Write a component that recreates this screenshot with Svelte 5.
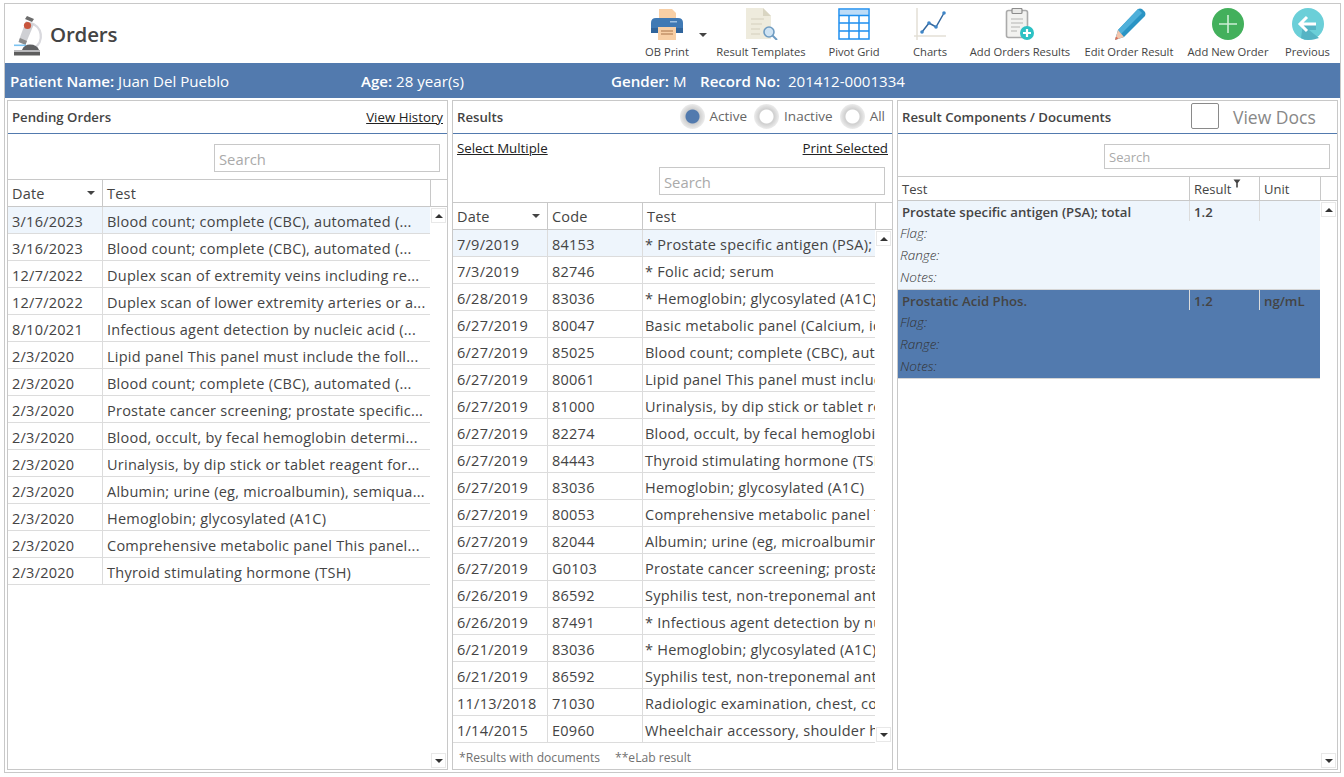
<script>
  const pending = [
    ['3/16/2023','Blood count; complete (CBC), automated (...'],
    ['3/16/2023','Blood count; complete (CBC), automated (...'],
    ['12/7/2022','Duplex scan of extremity veins including re...'],
    ['12/7/2022','Duplex scan of lower extremity arteries or a...'],
    ['8/10/2021','Infectious agent detection by nucleic acid (...'],
    ['2/3/2020','Lipid panel This panel must include the foll...'],
    ['2/3/2020','Blood count; complete (CBC), automated (...'],
    ['2/3/2020','Prostate cancer screening; prostate specific...'],
    ['2/3/2020','Blood, occult, by fecal hemoglobin determi...'],
    ['2/3/2020','Urinalysis, by dip stick or tablet reagent for...'],
    ['2/3/2020','Albumin; urine (eg, microalbumin), semiqua...'],
    ['2/3/2020','Hemoglobin; glycosylated (A1C)'],
    ['2/3/2020','Comprehensive metabolic panel This panel...'],
    ['2/3/2020','Thyroid stimulating hormone (TSH)']
  ];
  const results = [
    ['7/9/2019','84153','* Prostate specific antigen (PSA); total'],
    ['7/3/2019','82746','* Folic acid; serum'],
    ['6/28/2019','83036','* Hemoglobin; glycosylated (A1C)'],
    ['6/27/2019','80047','Basic metabolic panel (Calcium, ionized)'],
    ['6/27/2019','85025','Blood count; complete (CBC), automated'],
    ['6/27/2019','80061','Lipid panel This panel must include'],
    ['6/27/2019','81000','Urinalysis, by dip stick or tablet reagent'],
    ['6/27/2019','82274','Blood, occult, by fecal hemoglobin'],
    ['6/27/2019','84443','Thyroid stimulating hormone (TSH)'],
    ['6/27/2019','83036','Hemoglobin; glycosylated (A1C)'],
    ['6/27/2019','80053','Comprehensive metabolic panel This'],
    ['6/27/2019','82044','Albumin; urine (eg, microalbumin)'],
    ['6/27/2019','G0103','Prostate cancer screening; prostate'],
    ['6/26/2019','86592','Syphilis test, non-treponemal antibody'],
    ['6/26/2019','87491','* Infectious agent detection by nucleic'],
    ['6/21/2019','83036','* Hemoglobin; glycosylated (A1C)'],
    ['6/21/2019','86592','Syphilis test, non-treponemal antibody'],
    ['11/13/2018','71030','Radiologic examination, chest, complete'],
    ['1/14/2015','E0960','Wheelchair accessory, shoulder harness']
  ];
  const comps = [
    { name: 'Prostate specific antigen (PSA); total', val: '1.2', unit: '', cls: 'hl' },
    { name: 'Prostatic Acid Phos.', val: '1.2', unit: 'ng/mL', cls: 'sel' }
  ];
</script>

<div class="shell">
  <header class="top">
    <div class="brand">
      <svg width="32" height="42" viewBox="0 0 32 42">
        <path d="M17 9 A13.5 13.5 0 0 1 21 34" fill="none" stroke="#d9d9de" stroke-width="2.4"/>
        <path d="M14 2 L21 5 L19 8 L12 5 Z" fill="#6c6c6c"/>
        <path d="M13 7 L21 10 L13 29 L6 26 Z" fill="#cfd0d4"/>
        <path d="M7 24 L14 27 L12.5 31 L5.500 28 Z" fill="#8b8b8b"/>
        <circle cx="14.500" cy="11.500" r="3.600" fill="#c8553d"/>
        <rect x="1" y="30.500" width="12" height="1.600" fill="#7cc4f2"/>
        <path d="M9 36 Q11 30.500 17 30.500 Q24 30.500 26 36 Z" fill="#5f6062"/>
        <rect x="1" y="36" width="26" height="2" fill="#b9b9bc"/>
        <rect x="1" y="38" width="26" height="3.500" fill="#5e5e5e"/>
      </svg>
      <h1>Orders</h1>
    </div>
    <nav class="tools">
      <div class="tool">
        <svg width="34" height="32" viewBox="0 0 34 32">
          <path d="M9 1 H22 L26 5 V12 H9 Z" fill="#f8cfa5"/>
          <path d="M6 10 H28 Q33 10 33 15 V25 H1 V15 Q1 10 6 10 Z" fill="#3f79b4"/>
          <rect x="1" y="20" width="32" height="5" fill="#30659c"/>
          <rect x="20" y="13" width="7" height="1.500" fill="#9cc0e2"/>
          <rect x="8" y="19" width="18" height="13" fill="#f8cfa5"/>
          <path d="M11 23 H23 M11 26 H23" stroke="#a9744a" stroke-width="1"/>
        </svg>
        <span>OB Print</span>
        <i class="drop"></i>
      </div>
      <div></div>
      <div class="tool">
        <svg width="34" height="32" viewBox="0 0 34 32">
          <path d="M2 0 H19 L27 8 V31 H2 Z" fill="#eeebdd"/>
          <path d="M19 0 L27 8 H19 Z" fill="#d9d5c2"/>
          <path d="M7 11 H20 M7 16 H18 M7 21 H16 M7 26 H16" stroke="#ddd9c8" stroke-width="1.500"/>
          <circle cx="25" cy="24" r="5" fill="#cfe3f3" stroke="#6f9cc2" stroke-width="1.600"/>
          <path d="M28.500 27.500 L33 32" stroke="#6f9cc2" stroke-width="2"/>
        </svg>
        <span>Result Templates</span>
      </div>
      <div class="tool">
        <svg width="32" height="32" viewBox="0 0 32 32">
          <rect x="1" y="1" width="30" height="30" fill="#fff" stroke="#1e8fef" stroke-width="1.500"/>
          <rect x="2" y="2" width="28" height="5" fill="#bddcf7"/>
          <path d="M1 7.500 H31 M1 15 H31 M1 23 H31 M11 7.500 V31 M21 7.500 V31" stroke="#1e8fef" stroke-width="1.500" fill="none"/>
        </svg>
        <span>Pivot Grid</span>
      </div>
      <div class="tool">
        <svg width="34" height="32" viewBox="0 0 34 32">
          <path d="M4 0 V32 M1 28 H33" stroke="#e3e0d6" stroke-width="1.500" fill="none"/>
          <path d="M9 24 L16 15 L23 19 L31 5" stroke="#33679e" stroke-width="1.500" fill="none"/>
          <circle cx="9" cy="24" r="1.800" fill="#3f86c8"/>
          <circle cx="16" cy="15" r="1.800" fill="#3f86c8"/>
          <circle cx="23" cy="19" r="1.800" fill="#3f86c8"/>
          <circle cx="31" cy="5" r="1.800" fill="#3f86c8"/>
        </svg>
        <span>Charts</span>
      </div>
      <div class="tool">
        <svg width="30" height="32" viewBox="0 0 30 32">
          <rect x="1.500" y="2.500" width="21" height="27" rx="2" fill="#f2f2f0" stroke="#aaa" stroke-width="1.600"/>
          <rect x="7" y="0.500" width="10" height="5" rx="1" fill="#e8e8e6" stroke="#8c8c8c" stroke-width="1.200"/>
          <path d="M6 11 H18 M6 15 H18 M6 19 H15 M6 23 H12" stroke="#c9c9c6" stroke-width="1.300"/>
          <circle cx="22" cy="25" r="7" fill="#2cc1c4"/>
          <path d="M22 21 V29 M18 25 H26" stroke="#fff" stroke-width="2.200"/>
        </svg>
        <span>Add Orders Results</span>
      </div>
      <div class="tool">
        <svg width="34" height="32" viewBox="0 0 34 32">
          <path d="M3 32 L6 22 L26 1 Q28 0 30 1 L33 4 Q34 6 33 8 L12 29 Z" fill="#2a94c4"/>
          <path d="M6 22 L26 1 L30 5 L9 26 Z" fill="#4fb0da"/>
          <path d="M3 32 L6 22 L12 29 Z" fill="#f3c5ac"/>
          <path d="M3 32 L4 28.500 L6.500 30.500 Z" fill="#d9705a"/>
        </svg>
        <span>Edit Order Result</span>
      </div>
      <div class="tool">
        <svg width="32" height="32" viewBox="0 0 32 32">
          <circle cx="16" cy="16" r="16" fill="#43b05c"/>
          <path d="M16 7 V25 M7 16 H25" stroke="#cdeed5" stroke-width="1.600"/>
        </svg>
        <span>Add New Order</span>
      </div>
      <div class="tool">
        <svg width="32" height="32" viewBox="0 0 32 32">
          <circle cx="16" cy="16" r="16" fill="#6bcfd8"/>
          <path d="M11 16 H24 V22 H17 L27 30 Q22 32 16 32 Q12 32 9 30 Z" fill="#55b4c4"/>
          <path d="M15 9 L8 16 L15 23 M8 16 H24" stroke="#fff" stroke-width="3" fill="none"/>
        </svg>
        <span>Previous</span>
      </div>
    </nav>
  </header>

  <div class="patient">
    <span class="pname"><b>Patient Name:</b> Juan Del Pueblo</span>
    <span class="page"><b>Age:</b> 28 year(s)</span>
    <span class="pgender"><b>Gender:</b> M</span>
    <span><b>Record No:</b>&nbsp; 201412-0001334</span>
  </div>

  <main class="panels">
    <section class="panel">
      <div class="phead">
        <strong>Pending Orders</strong>
        <a href="#h">View History</a>
      </div>
      <div class="searchrow"><div class="search">Search</div></div>
      <div class="ghead two"><div class="c">Date<i class="sort"></i></div><div class="c">Test</div><div></div></div>
      <div class="gbody">
        <div class="rows">
          {#each pending as r, i}
            <div class="row two" class:hl={i === 0}><div class="c">{r[0]}</div><div class="c">{r[1]}</div></div>
          {/each}
        </div>
        <div class="sbar"><div class="sbtn"><i class="up"></i></div><div class="sbtn"><i class="down"></i></div></div>
      </div>
    </section>

    <section class="panel">
      <div class="phead">
        <strong>Results</strong>
        <div class="radios">
          <span class="radio on"></span><span class="rlabel">Active</span>
          <span class="radio"></span><span class="rlabel">Inactive</span>
          <span class="radio"></span><span class="rlabel">All</span>
        </div>
      </div>
      <div class="links"><a href="#s">Select Multiple</a><a href="#p">Print Selected</a></div>
      <div class="searchrow"><div class="search">Search</div></div>
      <div class="ghead three"><div class="c">Date<i class="sort"></i></div><div class="c">Code</div><div class="c">Test</div><div></div></div>
      <div class="gbody">
        <div class="rows">
          {#each results as r, i}
            <div class="row three" class:hl={i === 0}><div class="c">{r[0]}</div><div class="c">{r[1]}</div><div class="c">{r[2]}</div></div>
          {/each}
        </div>
        <div class="sbar"><div class="sbtn"><i class="up"></i></div><div class="sbtn"><i class="down"></i></div></div>
      </div>
      <div class="foot"><span>*Results with documents</span><span>**eLab result</span></div>
    </section>

    <section class="panel">
      <div class="phead">
        <strong>Result Components / Documents</strong>
        <div class="docs"><span class="check"></span><span class="vd">View Docs</span></div>
      </div>
      <div class="searchrow small"><div class="search">Search</div></div>
      <div class="ghead comp"><div class="c">Test</div><div class="c">Result<svg class="filter" width="8" height="9" viewBox="0 0 8 9"><path d="M0.500 0.500 H7.500 L4.800 4 V8.500 H3.200 V4 Z" fill="#444"/></svg></div><div class="c">Unit</div><div></div></div>
      <div class="gbody">
        <div class="rows">
          {#each comps as r}
            <div class="crow {r.cls}">
              <div class="ctop"><div class="c">{r.name}</div><div class="c">{r.val}</div><div class="c">{r.unit}</div></div>
              <div class="metas">
                <div class="meta">Flag:</div>
                <div class="meta">Range:</div>
                <div class="meta">Notes:</div>
              </div>
            </div>
          {/each}
        </div>
        <div class="sbar"><div class="sbtn"><i class="up"></i></div><div class="sbtn"><i class="down"></i></div></div>
      </div>
    </section>
  </main>
</div>

<style>
  :global(body) { margin: 0; background: #fff; }
  .shell {
    box-sizing: border-box;
    width: 1337px;
    height: 770px;
    margin: 3px 0 0 4px;
    border: 1px solid #c8c8c8;
    display: flex;
    flex-direction: column;
    font-family: "Open Sans", "Noto Sans", sans-serif;
    color: #444;
    overflow: hidden;
  }
  .top { height: 59px; flex: none; display: flex; justify-content: space-between; }
  .brand { display: flex; align-items: center; gap: 5px; padding: 3px 0 0 8px; }
  h1 { margin: 0 0 2px; font-size: 20.500px; font-weight: 600; color: #444; letter-spacing: -0.2px; }
  .tools {
    display: grid;
    grid-template-columns: 72px 8px 100px 86px 66px 114px 104px 94px 65px;
  }
  .tool {
    position: relative;
    display: flex;
    flex-direction: column;
    align-items: center;
    padding-top: 4px;
    white-space: nowrap;
  }
  .tool svg { display: block; height: 32px; }
  .tool span { margin-top: 4px; font-size: 11.200px; line-height: 16px; color: #444; }
  .drop {
    position: absolute;
    left: 68px;
    top: 29px;
    border: 4px solid transparent;
    border-top-color: #444;
    border-bottom: 0;
  }
  .patient {
    box-sizing: border-box;
    height: 35px;
    flex: none;
    background: #527aae;
    color: #fff;
    display: flex;
    align-items: center;
    font-size: 15.100px;
    padding: 1px 0 0 5px;
    white-space: nowrap;
  }
  .patient b { font-weight: 600; }
  .pname { width: 351px; }
  .page { width: 250px; }
  .pgender { width: 89px; }
  .panels {
    flex: 1;
    min-height: 0;
    display: grid;
    grid-template-columns: repeat(3, 441px);
    gap: 4px;
    padding: 2px 0 2px 2px;
  }
  .panel {
    box-sizing: border-box;
    border: 1px solid #c8c8c8;
    display: flex;
    flex-direction: column;
    min-height: 0;
    overflow: hidden;
  }
  .phead {
    box-sizing: border-box;
    height: 33px;
    flex: none;
    border-bottom: 1px solid #527aae;
    display: flex;
    align-items: center;
    justify-content: space-between;
    padding: 0 4px;
    font-size: 13.200px;
  }
  .phead strong { font-weight: 600; color: #444; }
  a { color: #222; text-decoration: underline; font-size: 13.300px; }
  .radios { display: flex; align-items: center; margin: 0 3px 2px 0; }
  .radio {
    width: 25px;
    height: 25px;
    border-radius: 50%;
    background: radial-gradient(circle, #fff 0 6.500px, #cfcfcf 7.500px, #ececec 12.500px);
    margin-right: 5px;
  }
  .radio.on { background: radial-gradient(circle, #527aae 0 6.500px, #cfcfcf 7.500px, #ececec 12.500px); }
  .rlabel { font-size: 13.500px; color: #666; margin-right: 7px; }
  .rlabel:last-child { margin-right: 0; }
  .docs { display: flex; align-items: center; }
  .check {
    box-sizing: border-box;
    width: 28px;
    height: 26px;
    border: 1px solid #8a8a8a;
    border-radius: 2px;
    margin: 0 14px 2px 0;
  }
  .vd { font-size: 17.500px; color: #888; width: 100px; }
  .links {
    display: flex;
    justify-content: space-between;
    padding: 6px 4px 0;
    height: 23px;
    flex: none;
    line-height: 17px;
    box-sizing: border-box;
  }
  .searchrow {
    box-sizing: border-box;
    height: 45px;
    flex: none;
    display: flex;
    justify-content: flex-end;
    padding: 10px 7px 0 0;
  }
  .searchrow.small { height: 42px; }
  .search {
    box-sizing: border-box;
    width: 226px;
    height: 28px;
    border: 1px solid #c8c8c8;
    padding-left: 4px;
    line-height: 28px;
    font-size: 14.800px;
    color: #aaa;
  }
  .small .search { height: 25px; line-height: 24px; font-size: 13px; }
  .ghead {
    flex: none;
    box-sizing: border-box;
    height: 28px;
    border-top: 1px solid #c8c8c8;
    border-bottom: 1px solid #c8c8c8;
    display: grid;
    grid-template-rows: 26px;
    font-size: 14.500px;
    letter-spacing: 0.2px;
    color: #444;
  }
  .ghead > div { border-right: 1px solid #c8c8c8; }
  .ghead > div:last-child { border-right: 0; }
  .ghead .c { position: relative; box-sizing: border-box; padding: 1px 0 0 4px; line-height: 25px; }
  .two { grid-template-columns: 95px 328px 1fr; }
  .three { grid-template-columns: 95px 95px 233px 1fr; }
  .row.two { grid-template-columns: 95px 327px; }
  .row.three { grid-template-columns: 95px 95px 232px; }
  .ghead.comp { grid-template-columns: 292px 70px 61px 1fr; grid-template-rows: 23px; height: 25px; font-size: 13px; letter-spacing: 0; }
  .comp .c { padding-top: 0; line-height: 24px; }
  .filter { position: absolute; left: 43px; top: 2px; }
  .sort {
    position: absolute;
    right: 7px;
    top: 11px;
    border: 4px solid transparent;
    border-top-color: #444;
    border-bottom: 0;
  }
  .gbody { flex: 1; min-height: 0; display: flex; }
  .rows { width: 422px; flex: none; }
  .row {
    display: grid;
    box-sizing: border-box;
    height: 27px;
    border-bottom: 1px solid #dcdcdc;
    font-size: 14.500px;
    letter-spacing: 0.25px;
    line-height: 23px;
    color: #444;
  }
  .row.hl { background: #eef5fc; }
  .row .c {
    padding: 3px 0 0 4px;
    overflow: hidden;
    white-space: nowrap;
    border-right: 1px solid #dcdcdc;
  }
  .row .c:last-child { border-right: 0; }
  .row.three .c:last-child { padding-left: 2px; }
  .sbar {
    flex: 1;
    display: flex;
    flex-direction: column;
    justify-content: space-between;
    padding: 1px 2px 1px 1px;
  }
  .sbtn {
    box-sizing: border-box;
    width: 15px;
    height: 15px;
    border: 1px solid #e8e8e8;
    display: flex;
    align-items: center;
    justify-content: center;
  }
  .up { border: 4px solid transparent; border-bottom-color: #333; border-top: 0; }
  .down { border: 4px solid transparent; border-top-color: #333; border-bottom: 0; }
  .foot {
    flex: none;
    height: 26px;
    display: flex;
    gap: 15px;
    align-items: center;
    padding: 2px 0 0 6px;
    box-sizing: border-box;
    font-size: 12.100px;
    color: #707070;
  }
  .crow { box-sizing: border-box; height: 89px; border-bottom: 1px solid #d5d5d5; color: #444; }
  .crow.hl { background: #eef5fc; }
  .crow.sel { background: #527aae; }
  .ctop {
    display: grid;
    grid-template-columns: 292px 70px 60px;
    height: 20px;
    font-size: 13.200px;
    font-weight: 600;
    line-height: 18px;
  }
  .ctop .c { padding: 2px 0 0 4px; border-right: 1px solid #dcdcdc; white-space: nowrap; overflow: hidden; }
  .ctop .c:last-child { border-right: 0; }
  .metas { padding-top: 1px; }
  .meta { font-size: 13.500px; font-style: italic; font-weight: 300; line-height: 22px; padding-left: 2px; color: #333; }
</style>
